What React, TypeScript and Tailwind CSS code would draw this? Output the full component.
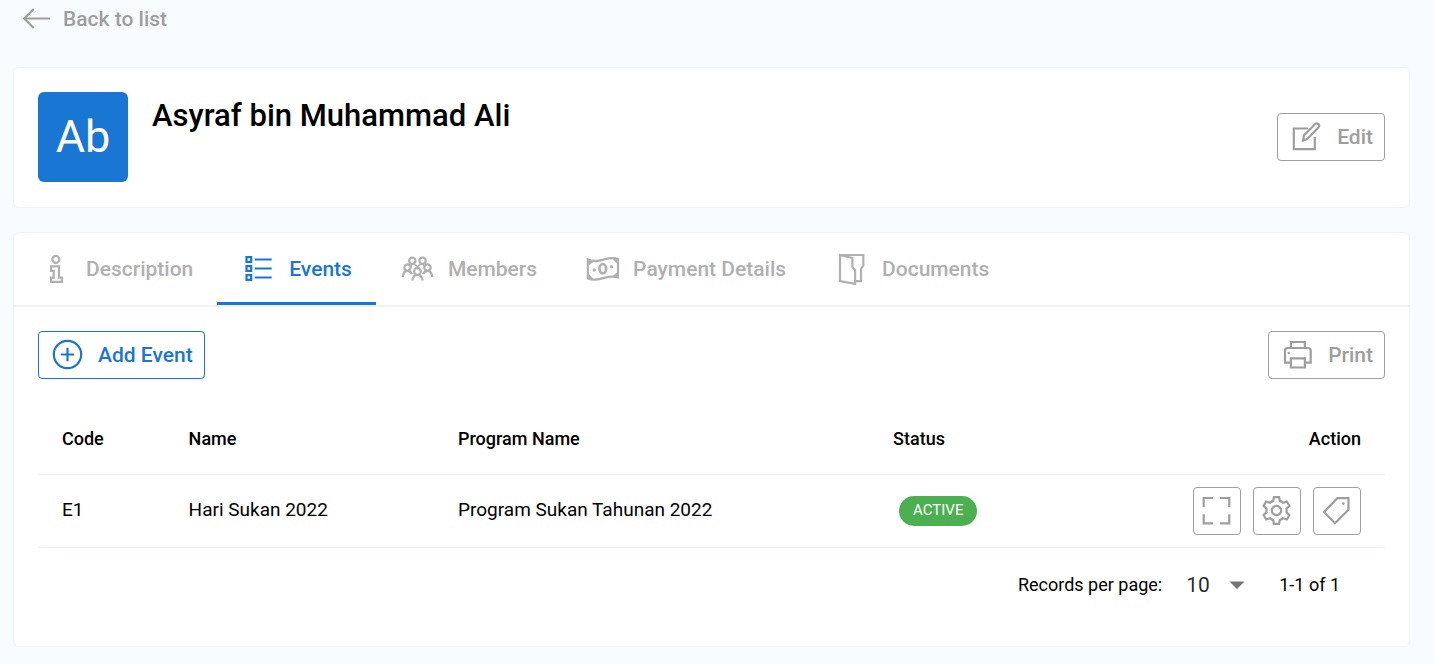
import { useState } from 'react'
import type { ReactNode } from 'react'
import clsx from 'clsx'

type IconProps = { children: ReactNode }

// All icons share the same 36px box
function Icon({ children }: IconProps) {
  return (
    <svg
      className="size-9 shrink-0"
      viewBox="0 0 36 36"
      fill="none"
      stroke="currentColor"
      strokeWidth="2.2"
      aria-hidden="true"
    >
      {children}
    </svg>
  )
}

const BackIcon = () => (
  <Icon>
    <path d="M35 17.5H9M18.7 8l-9.5 9.5 9.5 9.5" />
  </Icon>
)

const EditIcon = () => (
  <Icon>
    <path d="M19 9.5H4.800v20.700h21V18" />
    <path d="M14 21.500l.9-5.100L26.100 5.200c1-1 2.400-1 3.400-.1s.9 2.400-.1 3.400L18.300 20z" />
  </Icon>
)

const InfoIcon = () => (
  <Icon>
    <circle cx="17.800" cy="8.400" r="3.500" />
    <path d="M13 15.400h8v11.200h3v4.300H13v-4.300h2.700v-6.800H13z" />
  </Icon>
)

const ListIcon = () => (
  <Icon>
    <path d="M5.500 6.200h4.700v4.700H5.500zM5.500 15.200h4.700v4.700H5.500zM5.500 24.200h4.700v4.700H5.500z" />
    <path d="M13.700 8.500h17M13.700 17.500h17M13.700 26.500h17" strokeWidth="2" />
  </Icon>
)

const MembersIcon = () => (
  <Icon>
    <circle cx="12.300" cy="9.800" r="3.200" />
    <circle cx="22.600" cy="9.800" r="3.200" />
    <circle cx="7.500" cy="16.600" r="3.200" />
    <circle cx="27.500" cy="16.600" r="3.200" />
    <circle cx="17.500" cy="20.400" r="3.400" />
    <path d="M2.800 26c.4-3.600 2.200-6.100 4.700-6.100 2 0 3.500 1.200 4.400 3.200M32.200 26c-.4-3.600-2.200-6.100-4.700-6.100-2 0-3.500 1.200-4.400 3.200M12.300 29.500c.5-3.400 2.400-5.700 5.200-5.700s4.700 2.300 5.200 5.700" />
    <path d="M10.500 16.200c.5-1.400 1-3 2.400-3 2.300 0 4 1.400 4.600 3.600.6-2.200 2.300-3.600 4.600-3.600 1.400 0 1.900 1.600 2.400 3" strokeWidth="1.400" />
  </Icon>
)

const MoneyIcon = () => (
  <Icon>
    <path d="M2.800 8.500c7 3.200 12.200 1 17.200-.4 4.500-1.200 8.500-1.600 13-.2v18.500c-4.500-1.400-8.500-1-13 .2-5 1.400-10.200 3.600-17.200.9z" />
    <ellipse cx="17.800" cy="17.700" rx="3.300" ry="4.700" strokeWidth="2.600" />
    <g fill="currentColor" stroke="none">
      <circle cx="9.300" cy="19" r="1.700" />
      <circle cx="26.300" cy="15.700" r="1.700" />
      <path d="M3 9l6 1.500L3 15zM3 22l6 6.500-6-1zM33 8l-6-.5 6 6zM33 26.500l-6-1 6-5z" />
    </g>
  </Icon>
)

const DocumentsIcon = () => (
  <Icon>
    <path d="M6 4h23.300v10.500L27 18v12.200h-5.500" />
    <path d="M6 4l12.400 3v9l2.700 3v13.900L6 30.200z" />
  </Icon>
)

const AddIcon = () => (
  <Icon>
    <circle cx="17.500" cy="17.500" r="13.700" />
    <path d="M17.500 10.800v13.400M10.800 17.500h13.400" />
  </Icon>
)

const PrintIcon = () => (
  <Icon>
    <path d="M10.900 11V5h14v6M10.900 25.600H5V13.500c0-1.400 1-2.500 2.500-2.500h20.700c1.500 0 2.500 1.100 2.500 2.500v12.100h-5.800" />
    <path d="M10.900 21.300h14v9.200h-14z" />
    <circle cx="8.800" cy="16" r="1.200" fill="currentColor" stroke="none" />
  </Icon>
)

const ExpandIcon = () => (
  <Icon>
    <path d="M4.700 14V5H14M21 5h9.300v9M30.300 21.200v9.200H21M14 30.400H4.700v-9.200" />
  </Icon>
)

const GearIcon = () => (
  <Icon>
    <g transform="translate(17.500 17.500)">
      <path d="M-2.600-13.400H2.600L3.300-9.600Q5.200-9 6.700-7.700L10.300-9 12.900-4.500 10-1.900Q10.300 0 10 1.900L12.900 4.500 10.300 9 6.700 7.700Q5.200 9 3.300 9.600L2.600 13.400H-2.600L-3.300 9.600Q-5.200 9-6.700 7.700L-10.300 9-12.900 4.500-10 1.900Q-10.300 0-10-1.900L-12.900-4.500-10.300-9-6.700-7.700Q-5.200-9-3.300-9.600z" />
      <circle r="4.700" />
    </g>
  </Icon>
)

const TagIcon = () => (
  <Icon>
    <path d="M18.300 5.200h11.200v11.600L16 30.300 5 19z" />
    <circle cx="24.400" cy="10.600" r="1.300" fill="currentColor" stroke="none" />
  </Icon>
)

const tabs = [
  { name: 'Description', icon: <InfoIcon /> },
  { name: 'Events', icon: <ListIcon /> },
  { name: 'Members', icon: <MembersIcon /> },
  { name: 'Payment Details', icon: <MoneyIcon /> },
  { name: 'Documents', icon: <DocumentsIcon /> },
]

const events = [
  {
    code: 'E1',
    name: 'Hari Sukan 2022',
    program: 'Program Sukan Tahunan 2022',
    status: 'ACTIVE',
  },
]

const rowActions = [
  { label: 'View event', icon: <ExpandIcon /> },
  { label: 'Event settings', icon: <GearIcon /> },
  { label: 'Event tag', icon: <TagIcon /> },
]

type ButtonProps = {
  icon: ReactNode
  children: ReactNode
  primary?: boolean
}

function OutlineButton({ icon, children, primary }: ButtonProps) {
  return (
    <button
      type="button"
      className={clsx(
        'flex h-12 items-center gap-3 rounded border border-current px-[11px] text-[21px] leading-9 font-medium',
        primary ? 'text-[#1976d2]' : 'text-[#9e9e9e]',
      )}
    >
      {icon}
      {children}
    </button>
  )
}

export default function App() {
  const [tab, setTab] = useState('Events')
  const [perPage, setPerPage] = useState('10')

  return (
    <main className="min-h-screen bg-[#f8fbff] pt-px pr-[25px] pb-4 pl-[13px] font-[Roboto,sans-serif] text-black">
      <a
        href="#"
        className="mb-[30px] ml-0.5 flex h-9 w-fit items-center gap-3 text-[21px] leading-9 font-medium text-[#9e9e9e]"
      >
        <BackIcon />
        Back to list
      </a>

      {/* Profile */}
      <section className="mb-6 flex items-center rounded-md border border-[#eef3f7] bg-white p-6 pb-[25px]">
        <div className="flex size-[90px] items-center justify-center rounded-md bg-[#1976d2] text-[45px] leading-[70px] text-white">
          Ab
        </div>
        <h1 className="ml-6 flex-1 self-start text-[31px] leading-12 font-medium">
          Asyraf bin Muhammad Ali
        </h1>
        <OutlineButton icon={<EditIcon />}>Edit</OutlineButton>
      </section>

      <section className="rounded-md border border-[#eef3f7] bg-white">
        <div role="tablist" className="flex border-b-2 border-[#eef3f7]">
          {tabs.map((item) => (
            <button
              key={item.name}
              type="button"
              role="tab"
              aria-selected={tab === item.name}
              onClick={() => setTab(item.name)}
              className={clsx(
                'flex h-18 items-center gap-3 border-y-3 border-t-transparent px-6 text-[21px] leading-9 font-medium',
                tab === item.name
                  ? 'border-b-[#1976d2] text-[#1976d2]'
                  : 'border-b-transparent text-[#b0b0b0]',
              )}
            >
              {item.icon}
              {item.name}
            </button>
          ))}
        </div>

        <div className="p-6">
          <div className="mb-6 flex items-center justify-between">
            <OutlineButton icon={<AddIcon />} primary>
              Add Event
            </OutlineButton>
            <OutlineButton icon={<PrintIcon />}>Print</OutlineButton>
          </div>

          <table className="w-full table-fixed text-left">
            <thead>
              <tr className="h-[71px] border-b border-[#eef1f4] text-[18px]">
                <th className="w-[9.4%] px-6 font-medium">Code</th>
                <th className="w-[20%] px-6 font-medium">Name</th>
                <th className="w-[32.3%] px-6 font-medium">Program Name</th>
                <th className="px-6 font-medium">Status</th>
                <th className="px-6 text-right font-medium">Action</th>
              </tr>
            </thead>
            <tbody>
              {events.map((event) => (
                <tr key={event.code} className="border-b border-[#eef1f4] text-[19px]">
                  <td className="px-6 py-3">{event.code}</td>
                  <td className="px-6 py-3">{event.name}</td>
                  <td className="px-6 py-3">{event.program}</td>
                  <td className="px-6 py-3">
                    <span className="ml-1.5 flex h-[30px] w-fit items-center rounded-full bg-[#4caf50] px-3.5 text-[15px] text-white">
                      {event.status}
                    </span>
                  </td>
                  <td className="px-6 py-3">
                    <div className="flex justify-end gap-3">
                      {rowActions.map((action) => (
                        <button
                          key={action.label}
                          type="button"
                          aria-label={action.label}
                          className="flex size-12 items-center justify-center rounded border border-current text-[#9e9e9e]"
                        >
                          {action.icon}
                        </button>
                      ))}
                    </div>
                  </td>
                </tr>
              ))}
            </tbody>
          </table>

          {/* Pagination */}
          <div className="flex h-[74px] items-center justify-end gap-6 pr-[45px] text-[18px]">
            <label htmlFor="per-page">Records per page:</label>
            <div className="relative">
              <select
                id="per-page"
                value={perPage}
                onChange={(e) => setPerPage(e.target.value)}
                className="block h-9 w-[69px] appearance-none text-[21px] leading-9 text-black/85"
              >
                <option>10</option>
                <option>25</option>
                <option>50</option>
              </select>
              <svg
                className="pointer-events-none absolute top-0 right-0 size-9 text-[#757575]"
                viewBox="0 0 36 36"
                fill="currentColor"
                aria-hidden="true"
              >
                <path d="M10.500 14.500h15L18 22z" />
              </svg>
            </div>
            <span>1-1 of 1</span>
          </div>
        </div>
      </section>
    </main>
  )
}
